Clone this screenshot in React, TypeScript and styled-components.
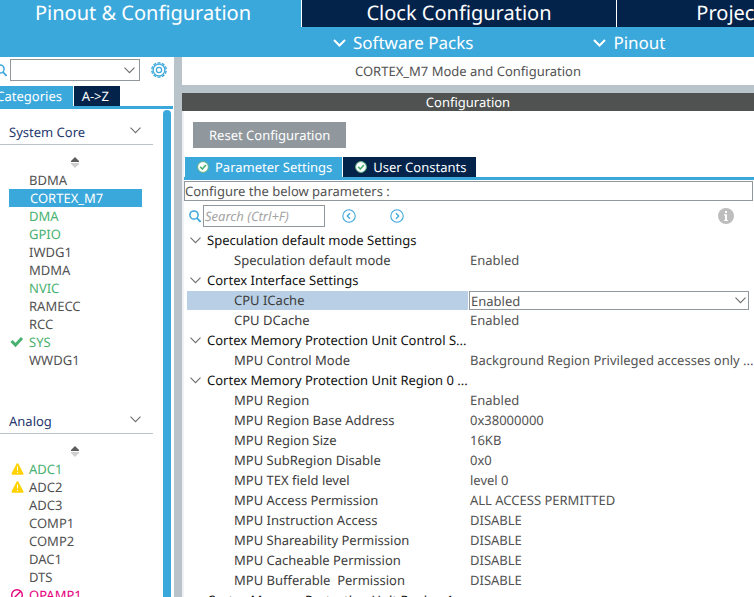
import React, { useState } from "react";
import styled, { createGlobalStyle, css } from "styled-components";

const color = {
  sky: "#3ba8dc",
  navy: "#03234b",
  steel: "#b8c4ca",
  edge: "#90989e",
  charcoal: "#4f5251",
  text: "#525252",
  green: "#49b170",
  pink: "#e6007e",
  amber: "#ffd200",
  select: "#b8cfe5",
};

const GlobalStyle = createGlobalStyle`
  *, *::before, *::after { box-sizing: border-box; }
  body {
    margin: 0;
    background: #fff;
    font-family: "Noto Sans", sans-serif;
    font-size: 13px;
    line-height: 18px;
    color: ${color.text};
    text-rendering: geometricPrecision;
  }
  button, input, select { font: inherit; color: inherit; margin: 0; border-radius: 0; text-rendering: inherit; }
  button { border: 0; padding: 0; background: none; cursor: pointer; }
  svg { display: block; flex: none; }
`;

const Page = styled.div`
  display: flex;
  flex-direction: column;
  height: 100vh;
  overflow: hidden;
`;

const MainTabs = styled.nav`
  display: flex;
  flex: none;
  height: 27px;
  overflow: hidden;
  background: ${color.sky};
`;

const MainTab = styled.button<{ $active?: boolean }>`
  flex: 1 0 315px;
  padding-bottom: 2px;
  font-size: 20px;
  line-height: 25px;
  white-space: nowrap;
  color: #fff;
  background: ${color.navy};
  border-left: 1px solid #fff;
  ${(p) =>
    p.$active &&
    css`
      flex: 0 0 301px;
      padding-right: 15px;
      background: ${color.sky};
      border-left: 0;
    `}
`;

const SubBar = styled.div`
  display: flex;
  flex: none;
  gap: 120px;
  height: 30px;
  padding: 2px 0 0 333px;
  background: ${color.sky};
`;

const SubMenu = styled.button`
  display: flex;
  align-items: center;
  gap: 7px;
  font-size: 17px;
  white-space: nowrap;
  color: #fff;
`;

const Body = styled.div`
  display: flex;
  flex: 1;
  min-height: 0;
`;

const Sidebar = styled.aside`
  display: flex;
  flex-direction: column;
  flex: none;
  width: 174px;
  overflow: hidden;
`;

const FinderRow = styled.div`
  display: flex;
  align-items: center;
  flex: none;
  height: 26px;
  margin-bottom: 3px;
  margin-left: -5px;
  gap: 3px;
`;

const ComboBox = styled.div<{ $wide?: boolean }>`
  display: grid;
  align-items: center;
  width: ${(p) => (p.$wide ? "auto" : "130px")};
  height: ${(p) => (p.$wide ? "19px" : "22px")};
  & > * { grid-area: 1 / 1; }
  & > svg { justify-self: end; margin-right: ${(p) => (p.$wide ? "3px" : "5px")}; pointer-events: none; }
`;

const Select = styled.select`
  width: 100%;
  height: 100%;
  padding: 0 20px 0 1px;
  line-height: 16px;
  appearance: none;
  background: #fff;
  border: 1px solid ${color.edge};
  outline: 0;
`;

const GearButton = styled.button`
  margin-left: 8px;
`;

const TabStrip = styled.div`
  display: flex;
  gap: 1px;
  flex: none;
  height: 23px;
  border-bottom: 3px solid ${color.sky};
`;

const SideTabs = styled(TabStrip)`
  margin-right: 1px;
`;

const Tab = styled.button<{ $active?: boolean }>`
  display: flex;
  align-items: center;
  justify-content: flex-end;
  height: 20px;
  padding-bottom: 1px;
  white-space: nowrap;
  color: #fff;
  background: ${(p) => (p.$active ? color.sky : color.navy)};
`;

const SideTab = styled(Tab)<{ $width: number }>`
  width: ${(p) => p.$width}px;
  padding-right: 11px;
`;

const SideScroll = styled.div`
  display: flex;
  flex: 1;
  min-height: 0;
  margin-top: 1px;
`;

const Groups = styled.div`
  flex: none;
  width: 163px;
  padding-right: 10px;
  overflow: hidden;
`;

const ScrollThumb = styled.div`
  width: 8px;
  background: ${color.sky};
  border-radius: 4px 4px 0 0;
`;

const Group = styled.section`
  margin-bottom: 30px;
`;

const GroupHeader = styled.button`
  display: flex;
  align-items: flex-end;
  justify-content: space-between;
  width: 100%;
  height: 25px;
  padding: 0 12px 3px 9px;
  color: #26386e;
  border-bottom: 1px solid ${color.steel};
  & > svg { margin-bottom: 7px; }
`;

const GroupHeading = styled.h2`
  margin: 0;
  padding-top: 10px;
  font: inherit;
`;

const SortButton = styled.button`
  display: block;
  margin: 0 auto;
  padding: 11px 4px 3px 0;
  height: 26px;
`;

const List = styled.ul`
  margin: 0;
  padding: 0 11px 0 9px;
  list-style: none;
`;

type Tone = "plain" | "green" | "pink";
const toneColor: Record<Tone, string> = { plain: color.text, green: color.green, pink: color.pink };

const Peripheral = styled.button<{ $tone: Tone; $selected?: boolean }>`
  display: grid;
  grid-template-columns: 20px 1fr;
  align-items: center;
  width: 100%;
  height: 18px;
  text-align: left;
  color: ${(p) => (p.$selected ? "#fff" : toneColor[p.$tone])};
  background: ${(p) => (p.$selected ? color.sky : "transparent")};
`;

const PeripheralName = styled.span<{ $selected?: boolean }>`
  padding-left: ${(p) => (p.$selected ? "1px" : "0")};
`;

const Divider = styled.div`
  flex: none;
  width: 8px;
  background: ${color.steel};
`;

const Main = styled.main`
  display: flex;
  flex-direction: column;
  flex: 1;
  min-width: 0;
  overflow: hidden;
`;

const Title = styled.h1`
  flex: none;
  margin: 0;
  height: 36px;
  border-bottom: 8px solid ${color.steel};
  font: inherit;
  line-height: 28px;
  text-align: center;
`;

const SectionBar = styled.h2`
  flex: none;
  margin: 0;
  font: inherit;
  text-align: center;
  color: #fff;
  background: ${color.charcoal};
`;

const Panel = styled.div`
  flex: 1;
  min-height: 0;
  padding: 11px 0 0;
  border-left: 2px solid #f0f1f4;
`;

const ResetButton = styled.button`
  height: 26px;
  margin-left: 9px;
  padding: 0 16px;
  color: #fff;
  background: ${color.edge};
`;

const PanelTabs = styled(TabStrip)`
  margin-top: 9px;
  padding-left: 1px;
`;

const PanelTab = styled(Tab)`
  gap: 6px;
  padding: 0 10px 1px 12px;
`;

const Hint = styled.p`
  height: 20px;
  margin: 1px 1px 0 0;
  border: 1px solid ${color.edge};
`;

const SearchRow = styled.div`
  display: flex;
  align-items: center;
  height: 22px;
  margin: 4px 20px 3px 5px;
`;

const SearchInput = styled.input`
  width: 122px;
  height: 22px;
  margin: 0 17px 0 2px;
  padding: 0 1px;
  border: 1px solid ${color.edge};
  outline: 0;
  &::placeholder { color: #a4a4a4; opacity: 1; font-style: italic; }
`;

const StepButton = styled.button`
  margin-right: 34px;
`;

const InfoButton = styled.button`
  margin-left: auto;
`;

const Tree = styled.table`
  width: calc(100% - 8px);
  margin-left: 3px;
  table-layout: fixed;
  border-collapse: separate;
  border-spacing: 0;
`;

const NameCol = styled.col`
  width: 282px;
`;

const TreeRow = styled.tr`
  height: 20px;
`;

const GroupCell = styled.th`
  padding: 0;
  font-weight: 400;
  text-align: left;
`;

const GroupToggle = styled.button`
  display: flex;
  align-items: center;
  gap: 6px;
  height: 20px;
  padding-left: 3px;
  white-space: nowrap;
  color: #111;
`;

const NameCell = styled.th<{ $selected?: boolean }>`
  height: 20px;
  padding: 0 0 0 47px;
  font-weight: 400;
  text-align: left;
  vertical-align: top;
  white-space: pre;
  color: #3c3c3c;
  background: ${(p) => (p.$selected ? color.select : "transparent")};
  background-clip: padding-box;
  border-top: 1px solid transparent;
  border-right: 1px solid #fff;
`;

const ValueCell = styled.td`
  height: 20px;
  padding: 0 0 0 1px;
  vertical-align: top;
  white-space: nowrap;
  border-top: 1px solid transparent;
`;

const EditorCell = styled(ValueCell)`
  padding: 0;
`;

const Caret = ({ bold = false }: { bold?: boolean }) =>
  bold ? (
    <svg width="13" height="8" viewBox="0 0 13 8" fill="none" stroke="#fff" strokeWidth="2">
      <path d="M1 1l5.5 5.5L12 1" />
    </svg>
  ) : (
    <svg width="11" height="7" viewBox="0 0 11 7" fill="none" stroke="#6e6e6e" strokeWidth="1.1">
      <path d="M.5.7l5 5 5-5" />
    </svg>
  );

const Magnifier = () => (
  <svg width="12" height="14" viewBox="0 0 12 14" fill="none" stroke={color.sky} strokeWidth="1.5">
    <circle cx="5" cy="6" r="4.1" />
    <path d="M7.9 9l3.6 3.8" strokeWidth="1.8" />
  </svg>
);

const Gear = () => {
  const teeth = Array.from({ length: 10 }, (_, i) => i * 36);
  return (
    <svg width="16" height="16" viewBox="0 0 16 16" fill="none" stroke={color.sky}>
      <circle cx="8" cy="8" r="5.8" strokeWidth="1.1" />
      <circle cx="8" cy="8" r="2.6" strokeWidth="1.2" />
      {teeth.map((a) => (
        <path key={a} d="M7 2V.7h2V2" strokeWidth="1.1" transform={`rotate(${a} 8 8)`} />
      ))}
    </svg>
  );
};

const SortArrows = () => (
  <svg width="8" height="11" viewBox="0 0 8 11">
    <path d="M4 0l4 4v1H0V4z" fill="#5c5c5c" />
    <path d="M4 11l4-4V6H0v1z" fill="#cfcfcf" />
  </svg>
);

const Tick = () => (
  <svg width="16" height="12" viewBox="0 0 16 12" fill="none" stroke={color.green} strokeWidth="3">
    <path d="M2.5 5l4 4L13 2" />
  </svg>
);

const Warning = () => (
  <svg width="16" height="12" viewBox="0 0 16 12">
    <path d="M8.5 1.2l5 9.6h-10z" fill={color.amber} stroke={color.amber} strokeWidth="2" strokeLinejoin="round" />
    <path d="M8.5 3.5v4M8.5 8.8v1.2" stroke="#fff" strokeWidth="1" />
  </svg>
);

const Forbidden = () => (
  <svg width="16" height="14" viewBox="0 0 16 14" fill="none" stroke={color.pink} strokeWidth="1.4">
    <circle cx="8" cy="7" r="5.3" />
    <path d="M4.3 10.7l7.4-7.4" />
  </svg>
);

const CheckBadge = () => (
  <svg width="12" height="12" viewBox="0 0 12 12">
    <circle cx="6" cy="6" r="5.4" fill="#fff" stroke="#5fb583" strokeWidth="1" />
    <path d="M3.2 5.8l2.1 2.2 3.6-4" fill="none" stroke={color.green} strokeWidth="1.6" />
  </svg>
);

const StepIcon = ({ next = false }: { next?: boolean }) => (
  <svg width="14" height="14" viewBox="0 0 14 14" fill="none" stroke={color.sky}>
    <circle cx="7" cy="7" r="6.2" strokeWidth="1.1" />
    <path d={next ? "M6 4.3L8.7 7 6 9.7" : "M8 4.3L5.3 7 8 9.7"} strokeWidth="1.3" />
  </svg>
);

const InfoIcon = () => (
  <svg width="16" height="16" viewBox="0 0 16 16">
    <circle cx="8" cy="8" r="8" fill="#bdbdbd" />
    <path d="M7 3h2v2H7zM6 6.3h3v6H7V7.5H6zM6 12h4v1H6z" fill="#fff" />
  </svg>
);

type Mark = "ok" | "warning" | "off";
type Item = { name: string; tone?: Tone; mark?: Mark };

const sections: { title: string; items: Item[] }[] = [
  {
    title: "System Core",
    items: [
      { name: "BDMA" },
      { name: "CORTEX_M7" },
      { name: "DMA", tone: "green" },
      { name: "GPIO", tone: "green" },
      { name: "IWDG1" },
      { name: "MDMA" },
      { name: "NVIC", tone: "green" },
      { name: "RAMECC" },
      { name: "RCC" },
      { name: "SYS", tone: "green", mark: "ok" },
      { name: "WWDG1" },
    ],
  },
  {
    title: "Analog",
    items: [
      { name: "ADC1", tone: "green", mark: "warning" },
      { name: "ADC2", mark: "warning" },
      { name: "ADC3" },
      { name: "COMP1" },
      { name: "COMP2" },
      { name: "DAC1" },
      { name: "DTS" },
      { name: "OPAMP1", tone: "pink", mark: "off" },
    ],
  },
];

const marks: Record<Mark, React.ReactNode> = { ok: <Tick />, warning: <Warning />, off: <Forbidden /> };

const parameters: { title: string; rows: [string, string][] }[] = [
  { title: "Speculation default mode Settings", rows: [["Speculation default mode", "Enabled"]] },
  {
    title: "Cortex Interface Settings",
    rows: [
      ["CPU ICache", "Enabled"],
      ["CPU DCache", "Enabled"],
    ],
  },
  {
    title: "Cortex Memory Protection Unit Control S...",
    rows: [["MPU Control Mode", "Background Region Privileged accesses only ..."]],
  },
  {
    title: "Cortex Memory Protection Unit Region 0 ...",
    rows: [
      ["MPU Region", "Enabled"],
      ["MPU Region Base Address", "0x38000000"],
      ["MPU Region Size", "16KB"],
      ["MPU SubRegion Disable", "0x0"],
      ["MPU TEX field level", "level 0"],
      ["MPU Access Permission", "ALL ACCESS PERMITTED"],
      ["MPU Instruction Access", "DISABLE"],
      ["MPU Shareability Permission", "DISABLE"],
      ["MPU Cacheable Permission", "DISABLE"],
      ["MPU Bufferable  Permission", "DISABLE"],
    ],
  },
  { title: "Cortex Memory Protection Unit Region 1 ...", rows: [] },
];

function PeripheralGroup({ title, items }: { title: string; items: Item[] }) {
  const [selected, setSelected] = useState("CORTEX_M7");
  return (
    <Group>
      <GroupHeading>
        <GroupHeader>
          {title}
          <Caret />
        </GroupHeader>
      </GroupHeading>
      <SortButton aria-label={`Sort ${title}`}>
        <SortArrows />
      </SortButton>
      <List>
        {items.map(({ name, tone = "plain", mark }) => (
          <li key={name}>
            <Peripheral $tone={tone} $selected={name === selected} onClick={() => setSelected(name)}>
              <span>{mark && marks[mark]}</span>
              <PeripheralName $selected={name === selected}>{name}</PeripheralName>
            </Peripheral>
          </li>
        ))}
      </List>
    </Group>
  );
}

function ParameterTree() {
  const [closed, setClosed] = useState<string[]>([]);
  const toggle = (title: string) =>
    setClosed((c) => (c.includes(title) ? c.filter((t) => t !== title) : [...c, title]));
  return (
    <Tree>
      <colgroup>
        <NameCol />
        <col />
      </colgroup>
      {parameters.map(({ title, rows }) => (
        <tbody key={title}>
          <TreeRow>
            <GroupCell colSpan={2} scope="rowgroup">
              <GroupToggle aria-expanded={!closed.includes(title)} onClick={() => toggle(title)}>
                <Caret />
                {title}
              </GroupToggle>
            </GroupCell>
          </TreeRow>
          {!closed.includes(title) &&
            rows.map(([name, value]) => {
              const editing = name === "CPU ICache";
              return (
                <TreeRow key={name}>
                  <NameCell scope="row" $selected={editing}>
                    {editing ? <label htmlFor="icache">{name}</label> : name}
                  </NameCell>
                  {editing ? (
                    <EditorCell>
                      <ComboBox $wide>
                        <Select id="icache" defaultValue={value}>
                          <option>Enabled</option>
                          <option>Disabled</option>
                        </Select>
                        <Caret />
                      </ComboBox>
                    </EditorCell>
                  ) : (
                    <ValueCell>{value}</ValueCell>
                  )}
                </TreeRow>
              );
            })}
        </tbody>
      ))}
    </Tree>
  );
}

export default function App() {
  return (
    <Page>
      <GlobalStyle />
      <MainTabs>
        <MainTab $active>Pinout &amp; Configuration</MainTab>
        <MainTab>Clock Configuration</MainTab>
        <MainTab>Project Manager</MainTab>
      </MainTabs>
      <SubBar>
        <SubMenu>
          <Caret bold />
          Software Packs
        </SubMenu>
        <SubMenu>
          <Caret bold />
          Pinout
        </SubMenu>
      </SubBar>
      <Body>
        <Sidebar>
          <FinderRow>
            <Magnifier />
            <ComboBox>
              <Select aria-label="Find peripheral" />
              <Caret />
            </ComboBox>
            <GearButton aria-label="Settings">
              <Gear />
            </GearButton>
          </FinderRow>
          <SideTabs>
            <SideTab $active $width={73}>
              Categories
            </SideTab>
            <SideTab $width={46}>A-&gt;Z</SideTab>
          </SideTabs>
          <SideScroll>
            <Groups>
              {sections.map((s) => (
                <PeripheralGroup key={s.title} {...s} />
              ))}
            </Groups>
            <ScrollThumb />
          </SideScroll>
        </Sidebar>
        <Divider />
        <Main>
          <Title>CORTEX_M7 Mode and Configuration</Title>
          <SectionBar>Configuration</SectionBar>
          <Panel>
            <ResetButton>Reset Configuration</ResetButton>
            <PanelTabs>
              <PanelTab $active>
                <CheckBadge />
                Parameter Settings
              </PanelTab>
              <PanelTab>
                <CheckBadge />
                User Constants
              </PanelTab>
            </PanelTabs>
            <Hint>Configure the below parameters :</Hint>
            <SearchRow>
              <Magnifier />
              <SearchInput aria-label="Search parameters" placeholder="Search (Ctrl+F)" />
              <StepButton aria-label="Previous match">
                <StepIcon />
              </StepButton>
              <StepButton aria-label="Next match">
                <StepIcon next />
              </StepButton>
              <InfoButton aria-label="Information">
                <InfoIcon />
              </InfoButton>
            </SearchRow>
            <ParameterTree />
          </Panel>
        </Main>
      </Body>
    </Page>
  );
}
